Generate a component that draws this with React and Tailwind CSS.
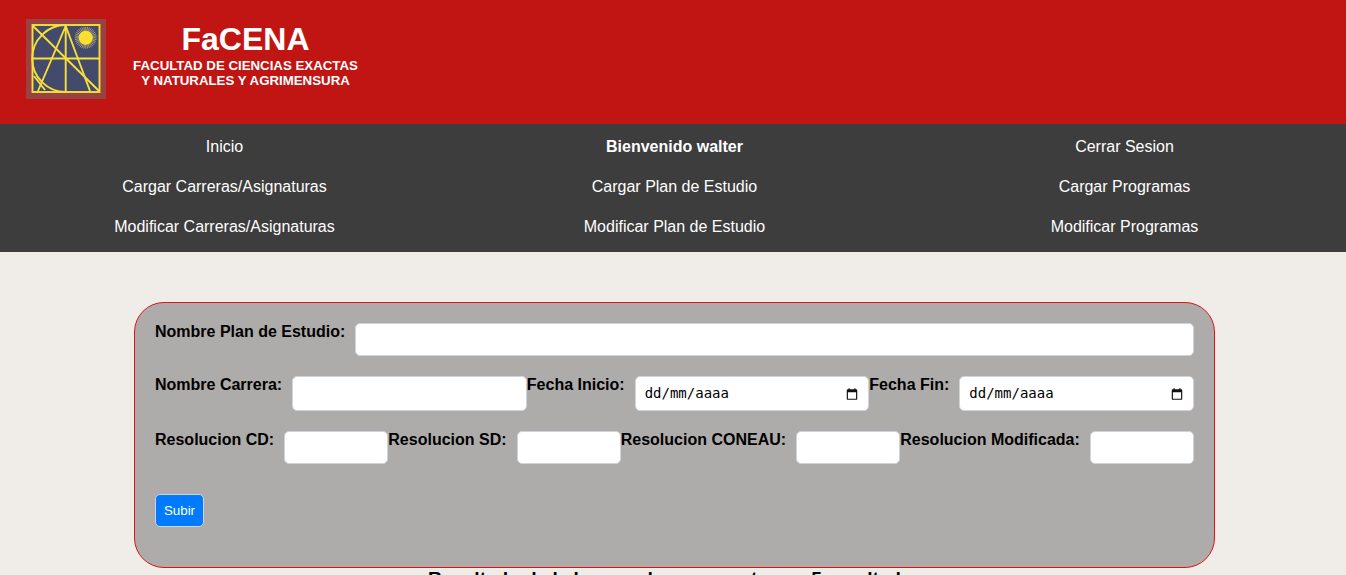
import React from 'react';

const sunRays = Array.from({ length: 36 }, (_, i) => (i * Math.PI) / 18);

const Logo = () => (
  <svg viewBox="0 0 80 80" className="w-20 h-20 shrink-0">
    <rect width="80" height="80" fill="#984342" />
    <rect x="6.5" y="6" width="67" height="67" fill="#434a6b" />
    <g stroke="#c9bf7a" strokeWidth="0.7">
      {sunRays.map((a) => (
        <line
          key={a}
          x1={59.7 + 6 * Math.cos(a)}
          y1={18.7 + 6 * Math.sin(a)}
          x2={59.7 + 11 * Math.cos(a)}
          y2={18.7 + 11 * Math.sin(a)}
        />
      ))}
    </g>
    <circle cx="59.7" cy="18.7" r="7" fill="#fde02e" />
    <g fill="none" stroke="#f8df3a" strokeWidth="1.9">
      <rect x="6.5" y="6" width="67" height="67" />
      <path d="M39.7 6V73M6.5 39.5H73.5" />
      <path d="M39.7 6A33.5 33.5 0 0 0 39.7 73" />
      <path d="M39.7 7L12 72" />
      <path d="M39.7 7L64 72" />
      <path d="M7 7L73 72" />
      <path d="M8 57L19 71" />
    </g>
  </svg>
);

const navItems = [
  ['Inicio', false],
  ['Bienvenido walter', true],
  ['Cerrar Sesion', false],
  ['Cargar Carreras/Asignaturas', false],
  ['Cargar Plan de Estudio', false],
  ['Cargar Programas', false],
  ['Modificar Carreras/Asignaturas', false],
  ['Modificar Plan de Estudio', false],
  ['Modificar Programas', false],
];

const Field = ({ label, tall }) => (
  <>
    <label className="font-bold text-black mr-[10px] whitespace-nowrap leading-[18px]">{label}</label>
    <input type="text" className={`flex-1 min-w-0 bg-white border border-[#ced4da] rounded-[5px] px-[10px] ${tall ? 'h-[35px]' : 'h-[33px]'}`} />
  </>
);

const DateField = ({ label }) => (
  <>
    <label className="font-bold text-black mr-[10px] whitespace-nowrap leading-[18px]">{label}</label>
    <div className="flex-1 min-w-0 h-[35px] bg-white border border-[#ced4da] rounded-[5px] flex items-center justify-between px-[10px] text-[14px] text-black font-['DejaVu_Sans_Mono',monospace]">
      <span className="-ml-[1px]">dd/mm/aaaa</span>
      <svg viewBox="0 0 24 24" className="w-[14px] h-[14px] -mr-[1px]" fill="#111">
        <path d="M19 4h-1V2h-2v2H8V2H6v2H5a2 2 0 0 0-2 2v14a2 2 0 0 0 2 2h14a2 2 0 0 0 2-2V6a2 2 0 0 0-2-2zm0 16H5V9h14v11z" />
      </svg>
    </div>
  </>
);

export default function App() {
  return (
    <div className="w-[1346px] h-[575px] overflow-hidden bg-[#f0ede8] font-['Liberation_Sans',Arial,sans-serif] text-[16px]">
      {/* Header */}
      <header className="h-[124px] bg-[#c11513] flex items-start pl-[26px] pt-[19px] text-white">
        <Logo />
        <div className="ml-[27px] w-[225px] text-center font-bold">
          <h1 className="text-[32px] leading-[37px] mt-[2px]">FaCENA</h1>
          <p className="text-[13.28px] leading-[15px] whitespace-nowrap">FACULTAD DE CIENCIAS EXACTAS</p>
          <p className="text-[13.28px] leading-[15px] whitespace-nowrap">Y NATURALES Y AGRIMENSURA</p>
        </div>
      </header>

      {/* Nav */}
      <nav className="h-[128px] bg-[#3d3d3d] text-white grid grid-cols-[449px_451px_449px] auto-rows-[40px] content-start pt-[3px]">
        {navItems.map(([text, bold]) => (
          <a key={text} className={`flex items-center justify-center ${bold ? 'font-bold' : ''}`}>{text}</a>
        ))}
      </nav>

      {/* Form */}
      <form className="mt-[50px] ml-[134px] w-[1081px] h-[266px] bg-[#aeacaa] border border-[#dc1414] rounded-[30px] pt-[20px] px-[20px]">
        <div className="flex items-start">
          <Field label="Nombre Plan de Estudio:" />
        </div>
        <div className="flex items-start mt-[20px]">
          <Field label="Nombre Carrera:" tall />
          <DateField label="Fecha Inicio:" />
          <DateField label="Fecha Fin:" />
        </div>
        <div className="flex items-start mt-[20px]">
          <Field label="Resolucion CD:" />
          <Field label="Resolucion SD:" />
          <Field label="Resolucion CONEAU:" />
          <Field label="Resolucion Modificada:" />
        </div>
        <button type="button" className="mt-[30px] block w-[49px] h-[33px] bg-[#007bff] border border-[#ced4da] rounded-[5px] text-white text-[13.33px]">Subir</button>
      </form>

      <h3 className="text-center font-bold text-[19px] leading-[22px] text-black pl-[5px]">Resultado de la busqueda se encontraron 5 resultados</h3>
    </div>
  );
}
